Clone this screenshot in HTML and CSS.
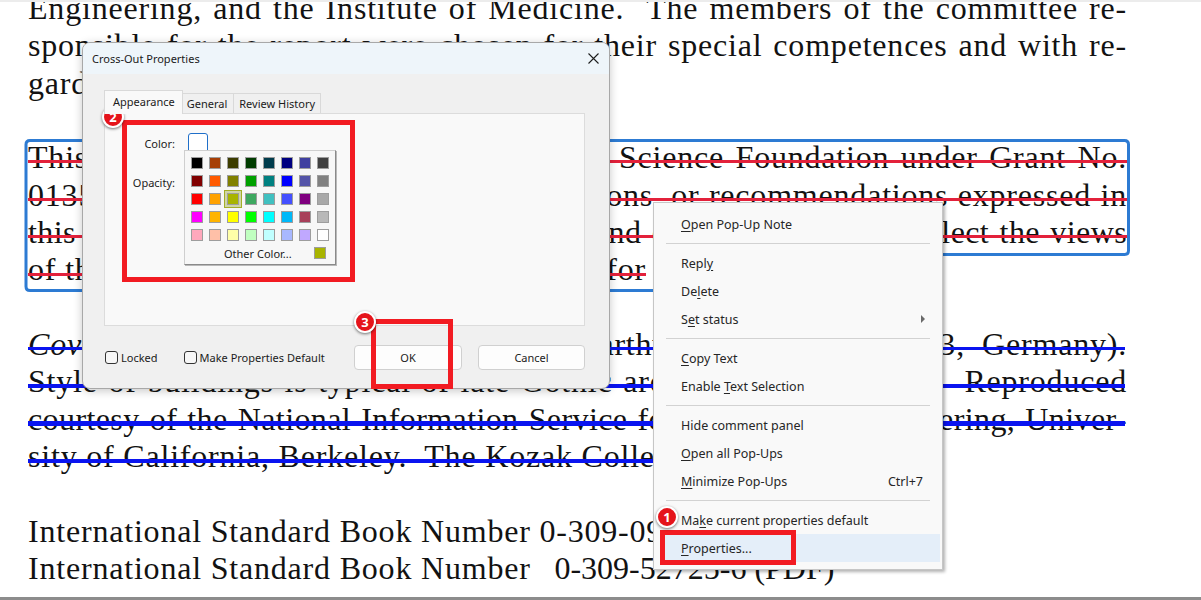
FILE: index.html
```html
<!DOCTYPE html>
<html>
<head>
<meta charset="utf-8">
<title>Cross-Out Properties</title>
<link rel="stylesheet" href="styles.css">
</head>
<body>
<div class="page">
  <div class="doc">
    <div class="ln j">Engineering, and the Institute of Medicine.&nbsp; The members of the committee re-</div>
    <div class="ln j">sponsible for the report were chosen for their special competences and with re-</div>
    <div class="ln">gard for appropriate balance.</div>
    <div class="ln"></div>
    <div class="ln j red">This study was supported by the National Science Foundation under Grant No.</div>
    <div class="ln j red">0135214. Any opinions, findings, conclusions, or recommendations expressed in</div>
    <div class="ln j red tight">this publication are those of the author(s) and do not necessarily reflect the views</div>
    <div class="ln red w618 j">of the organizations that provided support for</div>
    <div class="ln"></div>
    <div class="ln j blue thin"><i>Cover:</i> Cologne Cathedral, built over earthworks (Domkloster 3, Germany).</div>
    <div class="ln j blue">Style of buildings is typical of late Gothic architecture (ca. 1300).&nbsp; Reproduced</div>
    <div class="ln j blue tight">courtesy of the National Information Service for Earthquake Engineering, Univer-</div>
    <div class="ln blue fit">sity of California, Berkeley.&nbsp; The Kozak Collection.</div>
    <div class="ln"></div>
    <div class="ln">International Standard Book Number 0-309-09235-2</div>
    <div class="ln">International Standard Book Number <span class="gap"></span><span class="num">0-309-52725-6 (PDF)</span></div>
  </div>

  <svg class="annot" width="1201" height="600" viewBox="0 0 1201 600">
    <path d="M30 140.5 H1124.5 Q1128.5 140.5 1128.5 144.5 V250.5 Q1128.5 254.5 1124.5 254.5 H700 V290.5 H30 Q26 290.5 26 286.5 V144.5 Q26 140.5 30 140.5 Z" fill="none" stroke="#2d7bd3" stroke-width="3"/>
  </svg>

  <div class="dialog">
    <div class="titlebar">
      <span class="title">Cross-Out Properties</span>
      <svg class="close" width="11" height="11" viewBox="0 0 11 11"><path d="M0.5 0.5 L10.5 10.5 M10.5 0.5 L0.5 10.5" stroke="#1e1e1e" stroke-width="1.1"/></svg>
    </div>
    <div class="dbody">
      <div class="tabs">
        <div class="tab sel">Appearance</div>
        <div class="tab">General</div>
        <div class="tab">Review History</div>
      </div>
      <div class="panel">
        <div class="frow">
          <span class="lbl">Color:</span>
          <span class="cbtn"></span>
        </div>
        <div class="frow op">
          <span class="lbl">Opacity:</span>
        </div>
        <div class="popup">
          <div class="grid">
            <span class="cell"><i style="background:#000000"></i></span>
            <span class="cell"><i style="background:#a63f06"></i></span>
            <span class="cell"><i style="background:#3c3c00"></i></span>
            <span class="cell"><i style="background:#003c00"></i></span>
            <span class="cell"><i style="background:#003c4c"></i></span>
            <span class="cell"><i style="background:#000080"></i></span>
            <span class="cell"><i style="background:#4040a0"></i></span>
            <span class="cell"><i style="background:#404040"></i></span>

            <span class="cell"><i style="background:#800000"></i></span>
            <span class="cell"><i style="background:#ff5a00"></i></span>
            <span class="cell"><i style="background:#808000"></i></span>
            <span class="cell"><i style="background:#00a000"></i></span>
            <span class="cell"><i style="background:#008080"></i></span>
            <span class="cell"><i style="background:#0000ff"></i></span>
            <span class="cell"><i style="background:#5454a8"></i></span>
            <span class="cell"><i style="background:#808080"></i></span>

            <span class="cell"><i style="background:#ff0000"></i></span>
            <span class="cell"><i style="background:#ffa200"></i></span>
            <span class="cell cur"><i style="background:#a8b400"></i></span>
            <span class="cell"><i style="background:#3ea860"></i></span>
            <span class="cell"><i style="background:#40c0c0"></i></span>
            <span class="cell"><i style="background:#4450ff"></i></span>
            <span class="cell"><i style="background:#800080"></i></span>
            <span class="cell"><i style="background:#a8a8a8"></i></span>

            <span class="cell"><i style="background:#ff00ff"></i></span>
            <span class="cell"><i style="background:#ffb400"></i></span>
            <span class="cell"><i style="background:#ffff00"></i></span>
            <span class="cell"><i style="background:#00ff00"></i></span>
            <span class="cell"><i style="background:#00ffff"></i></span>
            <span class="cell"><i style="background:#00b8f8"></i></span>
            <span class="cell"><i style="background:#a8405a"></i></span>
            <span class="cell"><i style="background:#b8b8b8"></i></span>

            <span class="cell"><i style="background:#ffa8bc"></i></span>
            <span class="cell"><i style="background:#ffc0a8"></i></span>
            <span class="cell"><i style="background:#ffffa8"></i></span>
            <span class="cell"><i style="background:#c0ffc0"></i></span>
            <span class="cell"><i style="background:#c0ffff"></i></span>
            <span class="cell"><i style="background:#a8b8ff"></i></span>
            <span class="cell"><i style="background:#c0a8ff"></i></span>
            <span class="cell"><i style="background:#ffffff"></i></span>
          </div>
          <div class="other">
            <span>Other Color...</span>
            <i class="osw"></i>
          </div>
        </div>
      </div>
      <div class="footer">
        <label class="chk"><span class="box"></span>Locked</label>
        <label class="chk second"><span class="box"></span>Make Properties Default</label>
        <div class="btns">
          <span class="btn">OK</span>
          <span class="btn">Cancel</span>
        </div>
      </div>
    </div>
  </div>

  <div class="menu">
    <div class="mi"><span><u>O</u>pen Pop-Up Note</span></div>
    <div class="sep"></div>
    <div class="mi"><span>Repl<u>y</u></span></div>
    <div class="mi"><span>De<u>l</u>ete</span></div>
    <div class="mi"><span>S<u>e</u>t status</span><span class="arrow"></span></div>
    <div class="sep"></div>
    <div class="mi"><span><u>C</u>opy Text</span></div>
    <div class="mi"><span>Enable <u>T</u>ext Selection</span></div>
    <div class="sep"></div>
    <div class="mi"><span>Hide comment panel</span></div>
    <div class="mi"><span><u>O</u>pen all Pop-Ups</span></div>
    <div class="mi"><span><u>M</u>inimize Pop-Ups</span><span class="key">Ctrl+7</span></div>
    <div class="sep"></div>
    <div class="mi"><span>Ma<u>k</u>e current properties default</span></div>
    <div class="mi hover"><span><u>P</u>roperties...</span></div>
  </div>

  <div class="redbox rb1"></div>
  <div class="redbox rb2"></div>
  <div class="redbox rb3"></div>
  <div class="badge b1">1</div>
  <div class="badge b2">2</div>
  <div class="badge b3">3</div>
</div>
</body>
</html>
```
FILE: styles.css
```css
* { box-sizing: border-box; }
html, body { margin: 0; padding: 0; }
body { width: 1201px; height: 600px; overflow: hidden; background: #ffffff; }

.page {
  position: relative;
  width: 1201px;
  height: 600px;
  overflow: hidden;
  background: #ffffff;
  border-top: 2px solid #ececec;
  border-bottom: 3px solid #8c8c8c;
}

/* ---------- document text ---------- */
.doc {
  margin: -12px 0 0 28px;
  width: 1099px;
  font-family: "Liberation Serif", "Times New Roman", serif;
  font-size: 32px;
  line-height: 37.35px;
  letter-spacing: 0.8px;
  color: #121212;
}
.ln { position: relative; height: 37.35px; white-space: nowrap; }
.j { text-align: justify; text-align-last: justify; }
.tight { letter-spacing: 0.4px; }
.w618 { width: 618px; }
.fit { width: fit-content; }
.gap { display: inline-block; width: 15px; }
.num { letter-spacing: 0; }
.ln.red::after,
.ln.blue::after {
  content: "";
  position: absolute;
  left: 0;
  right: 0;
}
.ln.red::after { top: 21.1px; height: 3px; background: #e3213b; }
.ln.blue::after { top: 20.4px; height: 4.5px; background: #0a14f0; right: 2px; }
.ln.blue.thin::after { top: 21.4px; height: 2.5px; }
.ln.blue.fit::after { right: 0; }

.annot { position: absolute; left: 0; top: -2px; }

/* ---------- dialog ---------- */
.dialog {
  position: absolute;
  left: 82px;
  top: 40px;
  width: 528px;
  height: 347px;
  background: #f0f0f0;
  border: 1px solid #a8a8a8;
  border-radius: 8px;
  box-shadow: 0 2px 10px rgba(0, 0, 0, 0.22);
  overflow: hidden;
  display: flex;
  flex-direction: column;
  font-family: "Noto Sans", "Open Sans", sans-serif;
  font-size: 11px;
  color: #1b1b1b;
}
.titlebar {
  height: 31px;
  flex: none;
  background: #eef5fa;
  display: flex;
  align-items: center;
  justify-content: space-between;
  padding: 0 10px 0 9px;
}
.title { font-size: 11px; color: #1a1a1a; }
.close { display: block; }
.dbody {
  flex: 1;
  display: flex;
  flex-direction: column;
  padding: 16px 24px 0 21px;
}
.tabs { display: flex; align-items: flex-end; height: 23px; position: relative; z-index: 1; }
.tab {
  height: 20px;
  padding: 0 5px;
  display: flex;
  align-items: center;
  border: 1px solid #d9d9d9;
  border-bottom: none;
  border-left: none;
  background: #f0f0f0;
  color: #1b1b1b;
}
.tab.sel {
  height: 24px;
  margin-bottom: -1px;
  padding: 0 7px 2px 8px;
  background: #f9f9f9;
  border-left: 1px solid #d9d9d9;
}
.tab:nth-child(2) { padding: 0 6px 0 4px; }
.panel {
  position: relative;
  height: 213px;
  background: #f9f9f9;
  border: 1px solid #dcdcdc;
  padding-top: 19px;
}
.frow { display: flex; align-items: center; height: 20px; }
.frow.op { margin-top: 20px; height: 18px; }
.lbl { width: 70px; text-align: right; margin-right: 13px; }
.cbtn {
  width: 20px;
  height: 20px;
  border: 1px solid #1f6fc9;
  border-radius: 3px;
  background: #ffffff;
}
.popup {
  position: absolute;
  left: 79px;
  top: 36px;
  width: 152px;
  height: 115px;
  background: #f7f7f7;
  border: 1px solid #cfcfcf;
  border-right-color: #8a8a8a;
  border-bottom-color: #8a8a8a;
  box-shadow: 1px 1px 0 #b9b9b9;
  padding: 3px 0 0 3px;
}
.grid {
  display: grid;
  grid-template-columns: repeat(8, 18px);
  grid-auto-rows: 18px;
}
.cell { display: flex; align-items: center; justify-content: center; }
.cell i { display: block; width: 12px; height: 12px; border: 1px solid #9d9d9d; }
.cell.cur { background: #cfd5a6; border: 1px solid #a3ae26; }
.other {
  display: flex;
  align-items: center;
  height: 18px;
  padding-left: 36px;
}
.osw {
  display: block;
  width: 12px;
  height: 12px;
  margin-left: auto;
  margin-right: 9px;
  background: #a8b400;
  border: 1px solid #9d9d9d;
}
.footer {
  display: flex;
  align-items: center;
  height: 25px;
  margin-top: 19px;
  padding-left: 1px;
}
.chk { display: flex; align-items: center; }
.chk.second { margin-left: 26px; }
.box {
  width: 13px;
  height: 13px;
  border: 1px solid #333333;
  border-radius: 3px;
  background: #f7f7f7;
  margin-right: 3px;
}
.btns { margin-left: auto; display: flex; gap: 16px; }
.btn {
  width: 108px;
  height: 25px;
  display: flex;
  align-items: center;
  justify-content: center;
  background: #fdfdfd;
  border: 1px solid #d0d0d0;
  border-radius: 4px;
}
.btn + .btn { width: 107px; }

/* ---------- context menu ---------- */
.menu {
  position: absolute;
  left: 653px;
  top: 200px;
  width: 290px;
  height: 368px;
  background: #f9f9f9;
  border: 1px solid #c6c6c6;
  box-shadow: 2px 2px 3px rgba(0, 0, 0, 0.3);
  padding: 7px 2px 7px 6px;
  font-family: "Noto Sans", "Open Sans", sans-serif;
  font-size: 12.5px;
  color: #262626;
}
.mi {
  height: 28px;
  display: flex;
  align-items: center;
  justify-content: space-between;
  padding: 0 17px 0 21px;
}
.mi u { text-decoration-thickness: 1px; text-underline-offset: 2px; }
.mi.hover { background: #e4eef9; }
.arrow {
  width: 0;
  height: 0;
  margin-right: -2px;
  border-top: 4px solid transparent;
  border-bottom: 4px solid transparent;
  border-left: 4px solid #6a6a6a;
}
.sep { height: 11px; display: flex; align-items: center; padding: 0 10px 0 6px; }
.sep::before { content: ""; flex: 1; height: 1px; background: #d2d2d2; }

/* ---------- callouts ---------- */
.redbox { position: absolute; border: 5px solid #f21b22; }
.rb1 { left: 660px; top: 528px; width: 136px; height: 35px; }
.rb2 { left: 122px; top: 118px; width: 233px; height: 162px; }
.rb3 { left: 371px; top: 317px; width: 82px; height: 70px; }
.badge {
  position: absolute;
  width: 22px;
  height: 22px;
  border-radius: 50%;
  background: #e5141b;
  border: 2px solid #ffffff;
  box-shadow: 0 1px 3px rgba(0, 0, 0, 0.55);
  color: #ffffff;
  font-family: "Noto Sans", "Liberation Sans", sans-serif;
  font-weight: 700;
  font-size: 13px;
  line-height: 18px;
  text-align: center;
}
.b1 { left: 656px; top: 504px; }
.b2 { left: 102px; top: 104px; }
.b3 { left: 354px; top: 309px; }
```
